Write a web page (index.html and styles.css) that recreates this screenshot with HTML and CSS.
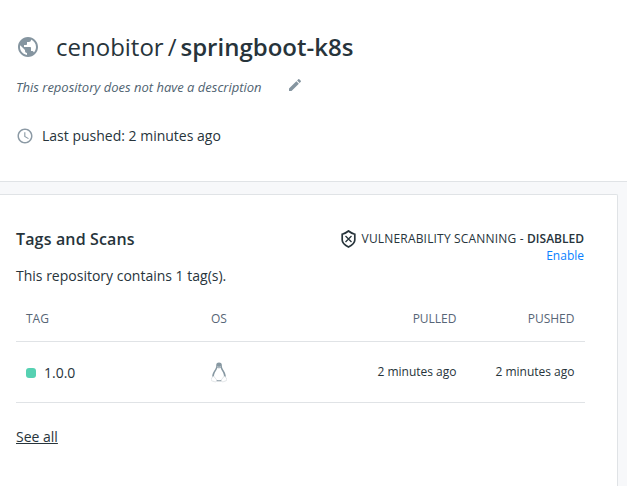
FILE: index.html
```html
<!DOCTYPE html>
<html lang="en">
<head>
<meta charset="utf-8">
<title>cenobitor/springboot-k8s</title>
<link rel="stylesheet" href="styles.css">
</head>
<body>
<header class="repo-header">
  <div class="repo-title">
    <svg class="globe" viewBox="0 0 24 24"><path d="M12 2C6.480 2 2 6.480 2 12s4.480 10 10 10 10-4.480 10-10S17.520 2 12 2zm-1 17.930c-3.950-.49-7-3.850-7-7.930 0-.62.080-1.210.21-1.790L9 15v1c0 1.100.9 2 2 2v1.930zm6.900-2.540c-.26-.81-1-1.390-1.900-1.390h-1v-3c0-.55-.45-1-1-1H8v-2h2c.55 0 1-.45 1-1V7h2c1.100 0 2-.9 2-2v-.41c2.930 1.190 5 4.060 5 7.410 0 2.080-.8 3.970-2.100 5.390z"/></svg>
    <h1 class="name"><span class="owner">cenobitor</span><span class="slash">/</span><span class="repo">springboot-k8s</span></h1>
  </div>
  <div class="description">
    <em class="description-text">This repository does not have a description</em>
    <svg class="pencil" viewBox="0 0 24 24"><path d="M3 17.250V21h3.750L17.810 9.940l-3.750-3.750L3 17.250zM20.710 7.040c.39-.39.39-1.020 0-1.410l-2.340-2.340c-.39-.39-1.020-.39-1.410 0l-1.830 1.830 3.750 3.750 1.830-1.830z"/></svg>
  </div>
  <div class="pushed">
    <svg class="clock" viewBox="0 0 24 24"><path d="M11.990 2C6.470 2 2 6.480 2 12s4.470 10 9.990 10C17.520 22 22 17.520 22 12S17.520 2 11.990 2zM12 20c-4.420 0-8-3.580-8-8s3.580-8 8-8 8 3.580 8 8-3.580 8-8 8zM12.500 7H11v6l5.250 3.150.75-1.230-4.500-2.670z"/></svg>
    <span class="pushed-text">Last pushed: 2 minutes ago</span>
  </div>
</header>
<main class="card">
  <div class="card-head">
    <h2 class="card-title">Tags and Scans</h2>
    <div class="scan">
      <div class="scan-status">
        <svg class="shield" viewBox="0 0 16 18"><path d="M7.500 1C5.700 2.500 3.900 3.500 1.200 4.200V10C1.200 13.300 4.200 15.300 7.500 17 10.800 15.300 13.800 13.300 13.800 10V4.200C11.100 3.500 9.300 2.500 7.500 1Z"/><path class="cross" d="M4.500 6l6 6M10.500 6l-6 6"/></svg>
        <span class="scan-text">VULNERABILITY SCANNING - <b>DISABLED</b></span>
      </div>
      <a class="enable">Enable</a>
    </div>
  </div>
  <p class="summary">This repository contains 1 tag(s).</p>
  <div class="row head">
    <span>TAG</span><span>OS</span><span class="end">PULLED</span><span class="end">PUSHED</span>
  </div>
  <div class="row item">
    <span class="tag"><i class="dot"></i><span class="tag-name">1.0.0</span></span>
    <span class="os"><svg class="linux" viewBox="0 0 16 21">
      <path class="body" d="M5.200 4.200C5 1.400 6.100.5 8 .5s3.100 1.100 2.900 3.700c0 2.700 3.600 5.400 3.900 9.800l-2.300 4.900H3.700L1.200 14c.4-4.400 4-7 4-9.800Z"/>
      <path class="belly" d="M6.400 5.500C6 8 3 10.600 3 14.500c0 2.600 2 4.400 5 4.400s5-1.800 5-4.400c0-3.900-3-6.500-3.400-9L8 6.500Z"/>
      <path class="foot" d="M2.500 13.900 5.800 18c.4 1.500-.9 2.100-2.200 1.700L.6 18.800c-.6-.5-.2-1.400-.3-2.700.8-.3 1.600-.8 2.200-2.200Z"/>
      <path class="foot" d="M13.400 13.900 10.200 18c-.4 1.500.9 2.100 2.200 1.700l3-1.100c.6-.5.1-1.200.2-2.500-.8-.3-1.600-.8-2.200-2.200Z"/>
      <path class="base" d="M5.800 18.800h4.400"/>
      <path class="face" d="M6.400 4.500 8 5.400l1.600-.9"/>
    </svg></span>
    <span class="end">2 minutes ago</span><span class="end">2 minutes ago</span>
  </div>
  <a class="see-all">See all</a>
</main>
</body>
</html>
```
FILE: styles.css
```css
* { box-sizing: border-box; }
body {
  margin: 0;
  height: 486px;
  overflow: hidden;
  display: flex;
  flex-direction: column;
  background: #f7f8fa;
  color: #27343b;
  font: 14px/20px "Open Sans", "Noto Sans", sans-serif;
}
svg { display: block; flex: none; }
.repo-header {
  height: 182px;
  flex: none;
  padding: 31px 16px 0;
  background: #fff;
  border-bottom: 1px solid #e0e3e6;
}
.repo-title { display: flex; align-items: center; height: 32px; }
.globe { width: 24px; height: 24px; fill: #8595a0; }
.name {
  display: flex;
  margin: 0 0 0 16px;
  font-size: 24px;
  line-height: 32px;
  font-weight: 400;
}
.slash { margin: 0 4px; }
.repo { font-weight: 600; }
.description { display: flex; align-items: center; height: 20px; margin-top: 14px; }
.description-text { font-size: 13px; color: #4f6371; }
.pencil { width: 16px; height: 16px; margin: -4px 0 0 25px; fill: #8595a0; }
.pushed { display: flex; align-items: center; height: 20px; margin-top: 29px; }
.clock { width: 18px; height: 18px; fill: #8c9aa5; }
.pushed-text { margin-left: 8px; }
.card {
  flex: 1;
  width: 618px;
  margin-top: 12px;
  padding: 34px 32px 0 16px;
  background: #fff;
  border: 1px solid #e0e3e6;
  border-width: 1px 1px 0 0;
  border-top-right-radius: 2px;
}
.card-head { display: flex; justify-content: space-between; height: 37px; }
.card-title { margin: 0; font-size: 16px; line-height: 20px; font-weight: 600; letter-spacing: .15px; }
.scan { display: flex; flex-direction: column; align-items: flex-end; font-size: 12px; }
.scan-status { display: flex; align-items: center; height: 19px; }
.scan-status b { font-weight: 600; letter-spacing: 0; }
.scan-text { margin-left: 5px; letter-spacing: .18px; padding-right: 1px; }
.shield { width: 16px; height: 18px; fill: none; stroke: #27343b; stroke-width: 1.7; }
.cross { stroke-width: 1.3; }
.enable { line-height: 16px; color: #087fff; padding-right: 1px; }
.summary { margin: 0; }
.row {
  display: grid;
  grid-template-columns: 185px 127.500px 118px 118px;
  align-items: center;
  padding: 0 10px;
  border-bottom: 1px solid #e0e3e6;
  font-size: 12px;
}
.head { height: 56px; padding-top: 10px; color: #576576; }
.item { height: 61px; }
.end { text-align: right; }
.tag { display: flex; align-items: center; font-size: 14px; padding-top: 2px; }
.dot { width: 10px; height: 10px; border-radius: 3px; background: #56d1b2; }
.tag-name { margin-left: 8px; }
.linux { width: 16px; height: 21px; }
.body { fill: #8798a2; }
.belly { fill: #fff; }
.foot { fill: #fff; stroke: #d5dade; stroke-width: .7; }
.base { stroke: #8798a2; stroke-width: 1; }
.face { fill: none; stroke: #d5dade; stroke-width: .8; }
.see-all { display: inline-block; margin-top: 24px; text-decoration: underline; }
```
